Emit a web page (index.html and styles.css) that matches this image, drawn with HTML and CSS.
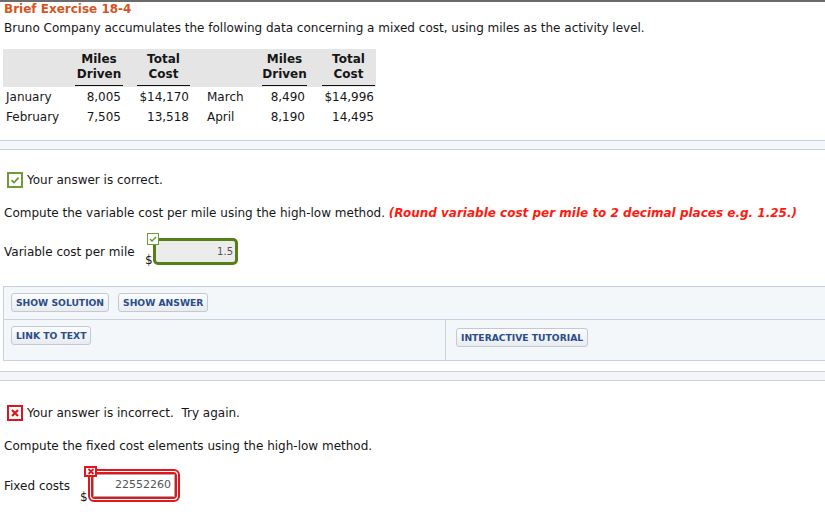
FILE: index.html
```html
<!DOCTYPE html>
<html>
<head>
<meta charset="utf-8">
<link rel="stylesheet" href="styles.css">
</head>
<body>
<div class="topbar"></div>
<div class="page">
  <h1 class="title">Brief Exercise 18-4</h1>
  <p class="intro">Bruno Company accumulates the following data concerning a mixed cost, using miles as the activity level.</p>
  <table class="data">
    <colgroup>
      <col class="w1"><col class="w2"><col class="w3"><col class="w4"><col class="w5"><col class="w6">
    </colgroup>
    <thead>
      <tr>
        <th></th>
        <th><div class="hd">Miles<br>Driven</div></th>
        <th><div class="hd hd-gap">Total<br>Cost</div></th>
        <th></th>
        <th><div class="hd">Miles<br>Driven</div></th>
        <th><div class="hd hd-gap2">Total<br>Cost</div></th>
      </tr>
    </thead>
    <tbody>
      <tr>
        <td class="lbl">January</td>
        <td class="num">8,005</td>
        <td class="num n3">$14,170</td>
        <td class="lbl2">March</td>
        <td class="num">8,490</td>
        <td class="num">$14,996</td>
      </tr>
      <tr>
        <td class="lbl">February</td>
        <td class="num">7,505</td>
        <td class="num n3">13,518</td>
        <td class="lbl2">April</td>
        <td class="num">8,190</td>
        <td class="num">14,495</td>
      </tr>
    </tbody>
  </table>
</div>

<div class="band band-1"></div>

<div class="page">
  <div class="status status-1">
    <span class="icon icon-ok"><svg width="12" height="12" viewBox="0 0 12 12"><path d="M2.5 6.2 L5 8.6 L9.6 3.6" fill="none" stroke="#5f9a22" stroke-width="1.6"/></svg></span>
    <span>Your answer is correct.</span>
  </div>
  <p class="question q-1">Compute the variable cost per mile using the high-low method. <em class="hint">(Round variable cost per mile to 2 decimal places e.g. 1.25.)</em></p>
  <div class="answer answer-1">
    <span class="alabel alabel-1">Variable cost per mile</span>
    <span class="dollar">$</span>
    <div class="field field-ok">
      <span class="badge badge-ok"><svg width="10" height="10" viewBox="0 0 10 10"><path d="M2 5 L4 7 L8 3" fill="none" stroke="#5f9a22" stroke-width="1.4"/></svg></span>
      <div class="fval">1.5</div>
    </div>
  </div>
</div>

<div class="tools">
  <div class="trow trow-1">
    <button class="btn">SHOW SOLUTION</button>
    <button class="btn">SHOW ANSWER</button>
  </div>
  <div class="trow trow-2">
    <div class="tcell tcell-left"><button class="btn">LINK TO TEXT</button></div>
    <div class="tcell tcell-right"><button class="btn">INTERACTIVE TUTORIAL</button></div>
  </div>
</div>

<div class="band band-2"></div>

<div class="page">
  <div class="status status-2">
    <span class="icon icon-bad"><svg width="12" height="12" viewBox="0 0 12 12"><path d="M3 3 L9 9 M9 3 L3 9" fill="none" stroke="#e0141b" stroke-width="2.2"/></svg></span>
    <span>Your answer is incorrect.&nbsp; Try again.</span>
  </div>
  <p class="question q-2">Compute the fixed cost elements using the high-low method.</p>
  <div class="answer answer-2">
    <span class="alabel alabel-2">Fixed costs</span>
    <span class="dollar">$</span>
    <div class="field field-bad">
      <span class="badge badge-bad"><svg width="8" height="7" viewBox="0 0 8 7"><path d="M1.5 1 L6.5 6 M6.5 1 L1.5 6" fill="none" stroke="#e0141b" stroke-width="1.8"/></svg></span>
      <div class="fring">
        <div class="fval fval-bad">22552260</div>
      </div>
    </div>
  </div>
</div>
</body>
</html>
```

FILE: styles.css
```css
html, body {
  margin: 0;
  padding: 0;
  background: #fff;
  overflow-x: hidden;
}
body {
  font-family: "DejaVu Sans", Verdana, sans-serif;
  font-size: 12px;
  color: #161616;
  width: 825px;
}
.topbar {
  height: 2px;
  background: #6b6b6b;
}
.page {
  padding-left: 3px;
}
.title {
  margin: 0;
  padding-left: 1px;
  font-size: 12px;
  line-height: 15px;
  font-weight: bold;
  color: #d8541d;
}
.intro {
  margin: 4px 0 0;
  padding-left: 1px;
  line-height: 15px;
  white-space: nowrap;
}
.data {
  margin-top: 13px;
  border-collapse: collapse;
  border-spacing: 0;
  table-layout: fixed;
  width: 373px;
}
.w1 { width: 72px; }
.w2 { width: 48px; }
.w3 { width: 67px; }
.w4 { width: 72px; }
.w5 { width: 45px; }
.w6 { width: 69px; }
.data th {
  background: #e5e5e5;
  height: 37px;
  padding: 0 0 1px;
  vertical-align: bottom;
  font-weight: bold;
  line-height: 15px;
}
.hd {
  text-align: center;
  border-bottom: 1px solid #111;
  padding-bottom: 3px;
}
.hd-gap { margin-left: 14px; }
.hd-gap2 { margin-left: 15px; margin-right: 1px; }
.data td {
  height: 20px;
  padding: 0;
  line-height: 20px;
  white-space: nowrap;
}
.lbl { padding-left: 3px !important; }
.lbl2 { padding-left: 17px !important; }
.num { text-align: right; padding-right: 2px !important; }
.n3 { padding-right: 1px !important; }

.band {
  height: 8px;
  background: #f4f6fa;
  border-top: 1px solid #c9d1df;
  border-bottom: 1px solid #c9d1df;
}
.band-1 { margin-top: 13px; }
.band-2 { margin-top: 10px; }

.status {
  display: flex;
  align-items: center;
  height: 16px;
  padding-left: 4px;
  white-space: nowrap;
}
.status-1 { margin-top: 22px; }
.status-2 { margin-top: 24px; }
.icon {
  box-sizing: border-box;
  width: 16px;
  height: 16px;
  display: flex;
  align-items: center;
  justify-content: center;
  background: #fff;
  margin-right: 4px;
}
.icon-ok { border: 2px solid #6f9b37; }
.icon-bad { border: 2px solid #e0141b; }

.question {
  margin: 17px 0 0;
  padding-left: 1px;
  line-height: 16px;
  white-space: nowrap;
}
.hint {
  font-weight: bold;
  font-style: italic;
  color: #ff1a10;
}

.answer {
  display: flex;
  align-items: center;
  padding-left: 1px;
  white-space: nowrap;
}
.answer-1 { margin-top: 17px; }
.answer-2 { margin-top: 15px; }
.alabel-1 { width: 141px; }
.alabel-2 { width: 76px; }
.dollar {
  align-self: flex-end;
  width: 8px;
  line-height: 13px;
  margin-bottom: -2px;
}
.field {
  position: relative;
  box-sizing: border-box;
}
.field-ok {
  width: 85px;
  height: 27px;
  border: 3px solid #557f17;
  border-radius: 5px;
  background: #ececec;
}
.fval {
  text-align: right;
  font-size: 10px;
  line-height: 21px;
  color: #555;
  padding-right: 2px;
}
.badge {
  position: absolute;
  box-sizing: border-box;
  display: flex;
  align-items: center;
  justify-content: center;
  background: #fff;
}
.badge-ok {
  left: -9px;
  top: -8px;
  width: 12px;
  height: 12px;
  border: 1px solid #6f9b37;
}
.field-bad {
  width: 92px;
  height: 33px;
  border: 2px solid #e3161c;
  border-radius: 6px;
  padding: 1px;
  background: #fff;
}
.fring {
  box-sizing: border-box;
  height: 100%;
  border: 2px solid #e3161c;
  border-radius: 4px;
}
.fval-bad {
  box-sizing: border-box;
  height: 100%;
  border: 1px solid #a9a9a9;
  font-size: 11px;
  line-height: 19px;
  padding-right: 3px;
  background: #fff;
}
.badge-bad {
  left: -6px;
  top: -5px;
  width: 13px;
  height: 11px;
  border: 2px solid #e3161c;
  z-index: 1;
}

.tools {
  margin: 21px -4px 0 3px;
  border: 1px solid #c9d1df;
  background: #f4f7fa;
}
.trow-1 {
  display: flex;
  gap: 9px;
  padding: 6px 7px 7px;
  border-bottom: 1px solid #c9d1df;
}
.trow-2 {
  display: flex;
  height: 40px;
}
.tcell-left {
  box-sizing: border-box;
  width: 442px;
  border-right: 1px solid #c9d1df;
  padding: 6px 0 0 7px;
}
.tcell-right {
  padding: 8px 0 0 10px;
}
.btn {
  height: 19px;
  padding: 0 4px;
  margin: 0;
  font-family: "DejaVu Sans", Verdana, sans-serif;
  font-size: 9.2px;
  font-weight: bold;
  color: #2b4d88;
  background: linear-gradient(#fbfcfd, #e8ecf1);
  border: 1px solid #c3cad4;
  border-radius: 3px;
  line-height: 17px;
  cursor: pointer;
}
```
